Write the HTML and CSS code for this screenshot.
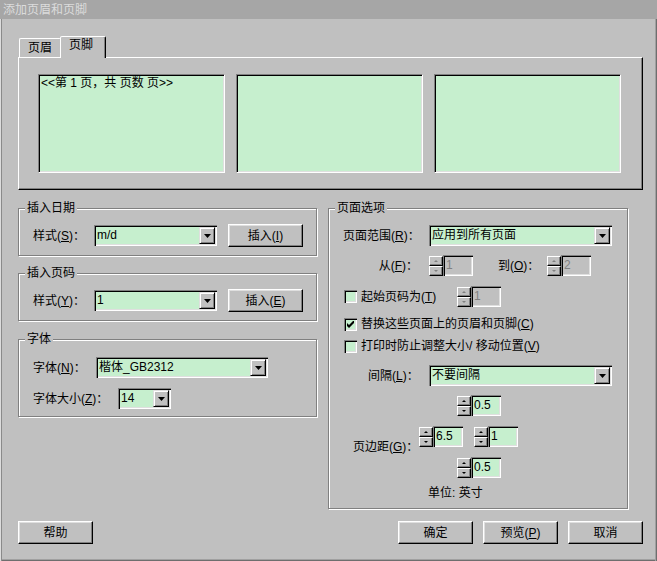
FILE: index.html
```html
<!DOCTYPE html>
<html lang="zh-CN">
<head>
<meta charset="utf-8">
<title>添加页眉和页脚</title>
<link rel="stylesheet" href="styles.css">
</head>
<body>
<div class="window">
  <div class="titlebar">添加页眉和页脚</div>

  <div class="tabs">
    <div class="tab">页眉</div>
    <div class="tab active">页脚</div>
  </div>

  <div class="panel">
    <div class="textbox">&lt;&lt;第 1 页，共 页数 页&gt;&gt;</div>
    <div class="textbox"></div>
    <div class="textbox"></div>
  </div>

  <div class="main">
    <div class="leftcol">
      <fieldset class="group g-date">
        <legend>插入日期</legend>
        <div class="gbody">
          <div class="row r23">
            <span class="lbl w61">样式(<u>S</u>)：</span>
            <div class="combo w123"><span class="val">m/d</span><span class="drop"><svg width="7" height="4" viewBox="0 0 7 4"><path d="M0 0H7L3.5 4Z"/></svg></span></div>
            <div class="btn ml11">插入(<u>I</u>)</div>
          </div>
        </div>
      </fieldset>

      <fieldset class="group g-page">
        <legend>插入页码</legend>
        <div class="gbody">
          <div class="row r23">
            <span class="lbl w61">样式(<u>Y</u>)：</span>
            <div class="combo w123"><span class="val">1</span><span class="drop"><svg width="7" height="4" viewBox="0 0 7 4"><path d="M0 0H7L3.5 4Z"/></svg></span></div>
            <div class="btn ml11">插入(<u>E</u>)</div>
          </div>
        </div>
      </fieldset>

      <fieldset class="group g-font">
        <legend>字体</legend>
        <div class="gbody fbody">
          <div class="row r21">
            <span class="lbl w63">字体(<u>N</u>)：</span>
            <div class="combo w172"><span class="val">楷体_GB2312</span><span class="drop"><svg width="7" height="4" viewBox="0 0 7 4"><path d="M0 0H7L3.5 4Z"/></svg></span></div>
          </div>
          <div class="row r21 mt10">
            <span class="lbl w85">字体大小(<u>Z</u>)：</span>
            <div class="combo w53"><span class="val">14</span><span class="drop"><svg width="7" height="4" viewBox="0 0 7 4"><path d="M0 0H7L3.5 4Z"/></svg></span></div>
          </div>
        </div>
      </fieldset>
    </div>

    <fieldset class="group g-opts">
      <legend>页面选项</legend>
      <div class="obody">
        <div class="row r21">
          <span class="lbl w86">页面范围(<u>R</u>)：</span>
          <div class="combo w183"><span class="val">应用到所有页面</span><span class="drop"><svg width="7" height="4" viewBox="0 0 7 4"><path d="M0 0H7L3.5 4Z"/></svg></span></div>
        </div>

        <div class="row r21 mt9">
          <span class="lbl w86 ar">从(<u>F</u>)：</span>
          <div class="spin disabled"><div class="sbtns"><span class="sb up"></span><span class="sb down"></span></div><div class="sedit">1</div></div>
          <span class="lbl to">到(<u>O</u>)：</span>
          <div class="spin disabled"><div class="sbtns"><span class="sb up"></span><span class="sb down"></span></div><div class="sedit">2</div></div>
        </div>

        <div class="row r21 mt10">
          <span class="cb"></span>
          <span class="cbtext w96">起始页码为(<u>T</u>)</span>
          <div class="spin disabled"><div class="sbtns"><span class="sb up"></span><span class="sb down"></span></div><div class="sedit">1</div></div>
        </div>

        <div class="crow mt10">
          <span class="cb"><svg class="check" width="7" height="7" viewBox="0 0 7 7"><path d="M0 2L2 4L7 -1V2L2 7L0 5Z"/></svg></span>
          <span class="cbtext">替换这些页面上的页眉和页脚(<u>C</u>)</span>
        </div>

        <div class="crow mt8">
          <span class="cb"></span>
          <span class="cbtext">打印时防止调整大小/ 移动位置(<u>V</u>)</span>
        </div>

        <div class="row r21 mt12">
          <span class="lbl w86 pl25">间隔(<u>L</u>)：</span>
          <div class="combo w183"><span class="val">不要间隔</span><span class="drop"><svg width="7" height="4" viewBox="0 0 7 4"><path d="M0 0H7L3.5 4Z"/></svg></span></div>
        </div>

        <div class="row r21 mt9 pl114">
          <div class="spin"><div class="sbtns"><span class="sb up"></span><span class="sb down"></span></div><div class="sedit">0.5</div></div>
        </div>

        <div class="row r21 mt10 margins">
          <span class="lbl mlabel">页边距(<u>G</u>)：</span>
          <div class="spin"><div class="sbtns"><span class="sb up"></span><span class="sb down"></span></div><div class="sedit">6.5</div></div>
          <div class="spin ml11"><div class="sbtns"><span class="sb up"></span><span class="sb down"></span></div><div class="sedit">1</div></div>
        </div>

        <div class="row r21 mt10 pl114">
          <div class="spin"><div class="sbtns"><span class="sb up"></span><span class="sb down"></span></div><div class="sedit">0.5</div></div>
        </div>

        <div class="crow mt8 pl85">单位: 英寸</div>
      </div>
    </fieldset>
  </div>

  <div class="buttons">
    <div class="btn help">帮助</div>
    <div class="btn">确定</div>
    <div class="btn">预览(<u>P</u>)</div>
    <div class="btn">取消</div>
  </div>
</div>
</body>
</html>
```

FILE: styles.css
```css
* { box-sizing: border-box; }
html, body { margin: 0; padding: 0; }
body {
  background: #c0c0c0;
  font-family: "Liberation Sans", "Noto Sans CJK SC", sans-serif;
  font-size: 12px;
  line-height: 14px;
  color: #000;
}
u { text-underline-offset: 1px; }

.window {
  width: 657px;
  height: 561px;
  overflow: hidden;
  background: #c0c0c0;
  box-shadow:
    inset 1px 0 0 #dcdcdc, inset 2px 0 0 #8a8a8a,
    inset -1px 0 0 #6e6e6e, inset -2px 0 0 #a0a0a0,
    inset 0 -1px 0 #6e6e6e, inset 0 -2px 0 #a0a0a0;
}

.titlebar {
  height: 19px;
  background: #a6a6a6;
  color: #dcdcdc;
  padding: 3px 0 0 3px;
  line-height: 14px;
}

/* tabs */
.tabs {
  display: flex;
  align-items: flex-end;
  height: 38px;
  padding-left: 19px;
}
.tab {
  width: 42px;
  height: 19px;
  border: 1px solid;
  border-bottom: 0;
  border-color: #fff #808080 transparent #fff;
  border-radius: 2px 2px 0 0;
  text-align: center;
  padding-top: 2px;
}
.tab.active {
  position: relative;
  z-index: 1;
  width: 46px;
  height: 22px;
  margin-left: -1px;
  margin-bottom: -1px;
  padding-top: 1px;
  padding-right: 4px;
  background: #c0c0c0;
  border-right-color: #000;
  box-shadow: inset -1px 0 0 #808080;
}

.panel {
  margin-left: 18px;
  width: 625px;
  height: 133px;
  border: 1px solid;
  border-color: #fff #000 #000 #fff;
  box-shadow: inset -1px -1px 0 #808080;
  padding: 16px 0 0 19px;
  display: grid;
  grid-template-columns: 187px 187px 187px;
  column-gap: 11px;
  align-items: start;
}
.textbox {
  height: 99px;
  background: #c6efce;
  border: 1px solid;
  border-color: #808080 #fff #fff #808080;
  box-shadow: inset 1px 1px 0 #000, inset -1px -1px 0 #dfdfdf;
  padding: 1px 2px;
  white-space: pre;
}

/* main area */
.main {
  display: grid;
  grid-template-columns: 299px 300px;
  column-gap: 11px;
  align-items: start;
  margin: 11px 0 0 18px;
}
.leftcol { display: flex; flex-direction: column; }

.group {
  margin: 0;
  padding: 0;
  min-width: 0;
  border: 1px solid #808080;
  box-shadow: 1px 1px 0 #fff, inset 1px 1px 0 #fff;
}
.group legend {
  margin-left: 6px;
  padding: 0 2px;
  line-height: 14px;
  background: #c0c0c0;
}
.g-page { margin-top: 10px; }
.g-font { margin-top: 11px; }

.gbody { padding: 9px 0 8px 14px; }
.fbody { padding: 11px 0 7px 14px; }
.obody { padding: 10px 0 8px 14px; }

.row { display: flex; align-items: center; }
.r23 { height: 23px; }
.r21 { height: 21px; }
.crow { display: flex; align-items: center; height: 14px; }
.mt8 { margin-top: 8px; }
.mt9 { margin-top: 9px; }
.mt10 { margin-top: 10px; }
.mt12 { margin-top: 12px; }
.ml11 { margin-left: 11px; }
.pl114 { padding-left: 114px; }
.pl85 { padding-left: 85px; }

.lbl { white-space: nowrap; flex: none; }
.w61 { width: 61px; }
.w63 { width: 63px; }
.w85 { width: 85px; }
.w86 { width: 86px; }
.w96 { width: 96px; }
.ar { text-align: right; padding-right: 11px; }
.pl25 { padding-left: 25px; }
.to { width: 49px; margin-left: 25px; }
.margins { align-items: flex-start; }
.mlabel { width: 76px; padding-left: 10px; margin-top: 14px; }

/* combo box */
.combo {
  display: flex;
  flex: none;
  height: 21px;
  padding: 2px;
  background: #c6efce;
  border: 0;
  box-shadow:
    inset 1px 1px 0 #808080, inset 2px 2px 0 #000,
    inset -1px -1px 0 #fff, inset -2px -2px 0 #dfdfdf;
}
.w123 { width: 123px; }
.w172 { width: 172px; }
.w53 { width: 53px; }
.w183 { width: 183px; }
.combo .val {
  flex: 1;
  min-width: 0;
  padding-left: 1px;
  line-height: 17px;
  white-space: nowrap;
  overflow: hidden;
}
.combo .drop {
  flex: none;
  width: 16px;
  height: 17px;
  background: #c0c0c0;
  border: 1px solid;
  border-color: #dfdfdf #000 #000 #dfdfdf;
  box-shadow: inset 1px 1px 0 #fff, inset -1px -1px 0 #808080;
  display: flex;
  align-items: center;
  justify-content: center;
}
.drop svg { display: block; fill: #000; }

/* push buttons */
.btn {
  flex: none;
  width: 75px;
  height: 23px;
  background: #c0c0c0;
  border: 1px solid;
  border-color: #fff #000 #000 #fff;
  box-shadow: inset -1px -1px 0 #808080, inset 1px 1px 0 #dfdfdf;
  display: flex;
  align-items: center;
  justify-content: center;
  white-space: nowrap;
}

/* spinner */
.spin { display: flex; flex: none; width: 44px; height: 21px; }
.sbtns { width: 14px; display: flex; flex-direction: column; justify-content: center; }
.sb {
  height: 10px;
  background: #c0c0c0;
  border: 1px solid;
  border-color: #fff #000 #000 #fff;
  box-shadow: inset -1px -1px 0 #808080;
  display: flex;
  align-items: center;
  justify-content: center;
}
.sb.up::before {
  content: "";
  border-left: 2px solid transparent;
  border-right: 2px solid transparent;
  border-bottom: 2px solid #000;
}
.sb.down::before {
  content: "";
  border-left: 2px solid transparent;
  border-right: 2px solid transparent;
  border-top: 2px solid #000;
}
.sedit {
  flex: 1;
  background: #c6efce;
  padding: 3px 0 0 3px;
  line-height: 15px;
  box-shadow:
    inset 1px 1px 0 #808080, inset 2px 2px 0 #000,
    inset -1px -1px 0 #fff, inset -2px -2px 0 #dfdfdf;
}
.spin.disabled .sedit { background: #c0c0c0; color: #808080; }
.spin.disabled .sb.up::before { border-bottom-color: #808080; }
.spin.disabled .sb.down::before { border-top-color: #808080; }

/* checkbox */
.cb {
  flex: none;
  width: 13px;
  height: 13px;
  margin-left: 1px;
  background: #c6efce;
  box-shadow:
    inset 1px 1px 0 #808080, inset 2px 2px 0 #000,
    inset -1px -1px 0 #fff, inset -2px -2px 0 #dfdfdf;
  display: flex;
  align-items: center;
  justify-content: center;
}
.check { display: block; fill: #000; }
.cbtext { margin-left: 4px; white-space: nowrap; flex: none; }

/* bottom buttons */
.buttons {
  display: flex;
  gap: 10px;
  width: 625px;
  margin: 12px 0 0 18px;
}
.btn.help { margin-right: auto; }
```
